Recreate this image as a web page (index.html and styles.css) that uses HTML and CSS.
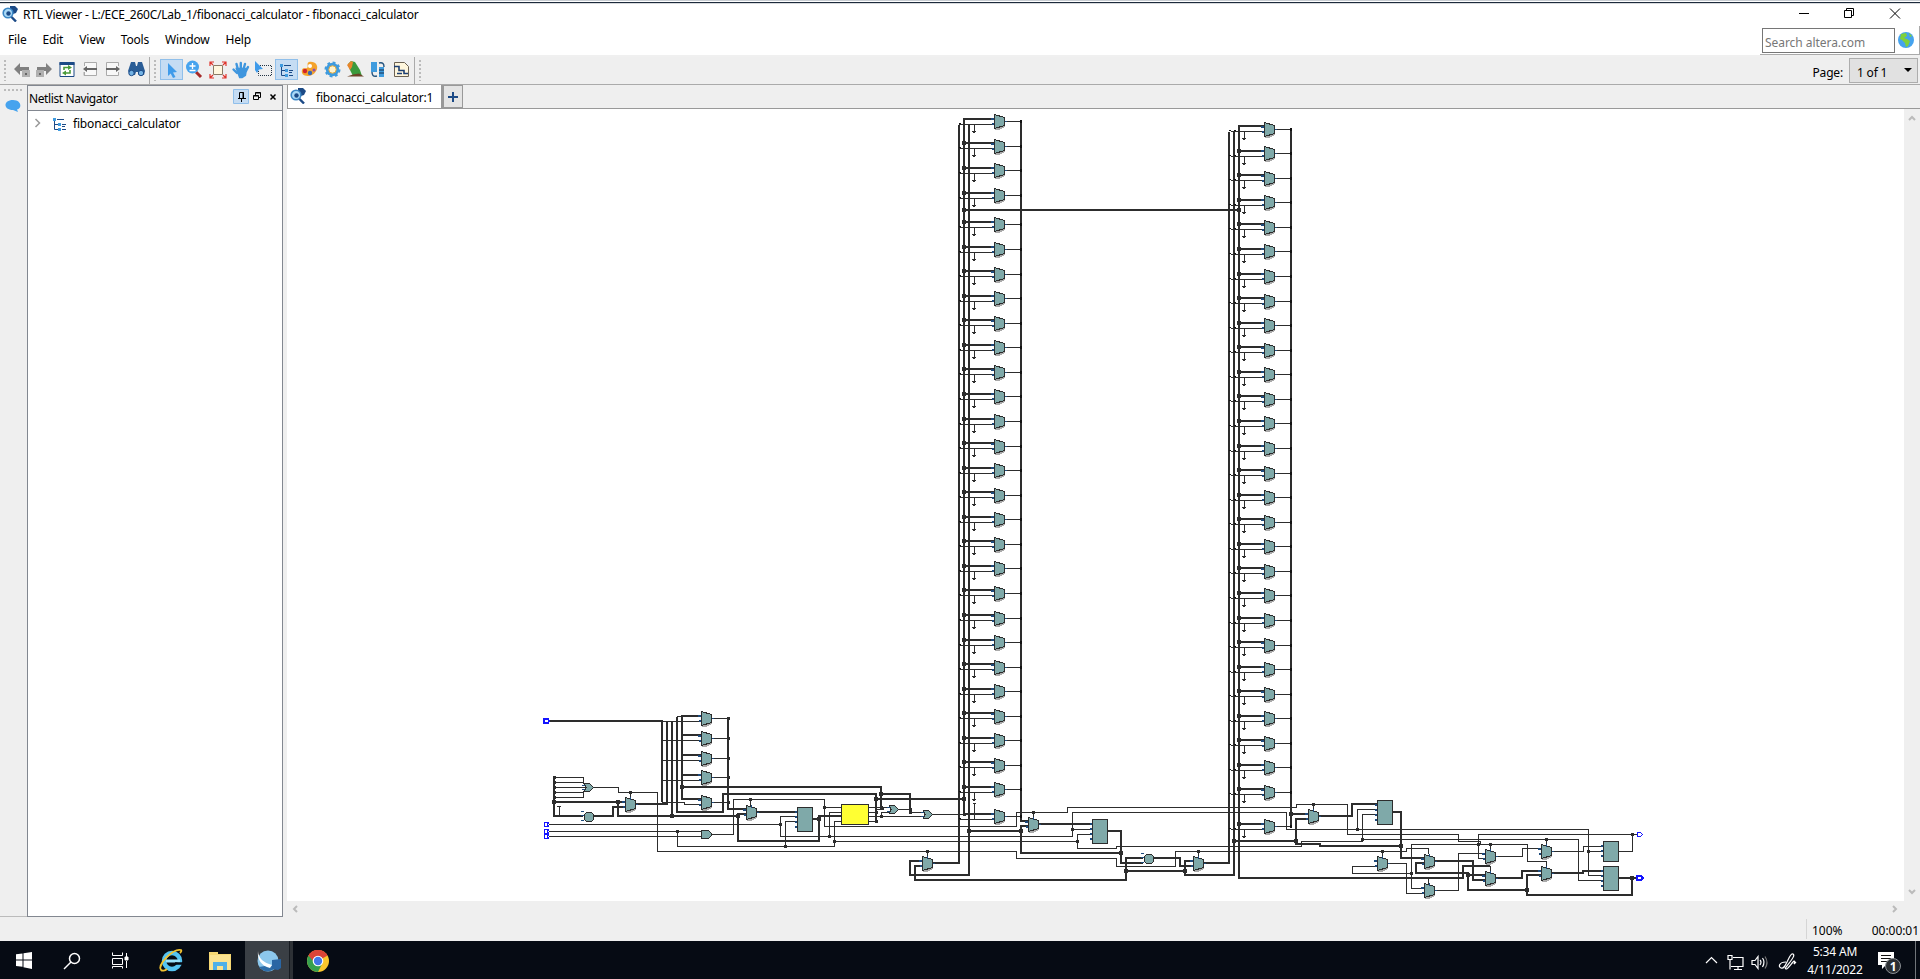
FILE: index.html
```
<!DOCTYPE html>
<html lang="en">
<head>
<meta charset="utf-8">
<title>RTL Viewer</title>
<link rel="stylesheet" href="styles.css">
</head>
<body>
<svg class="defs" width="0" height="0">
  <symbol id="viewer" viewBox="0 0 16 16"><path d="M8 0h5l3 3-2 4-3 1L8 5z" fill="#1c4a86"/><circle cx="6" cy="7" r="4.800" fill="#a9d9f7" stroke="#3b86c4" stroke-width="1.600"/><circle cx="6.500" cy="7.500" r="2.200" fill="#1c4a86"/><path d="M9.500 11l4.500 4.500" stroke="#1c4a86" stroke-width="2.400"/></symbol>
  <symbol id="tree" viewBox="0 0 16 16"><path d="M2.500 4v9.500h5M2.500 8.500h5M5 3.500h7M10 8.500h4M10 13.500h4M10 10.500h3" fill="none" stroke="#1c4a86"/><path d="M1 2h3v3H1zM6 7h3v3H6zM6 12h3v3H6z" fill="#3f9be0"/></symbol>
</svg>
<div class="window">
  <header class="title">
    <svg class="i16"><use href="#viewer"/></svg>
    <span class="title-text">RTL Viewer - L:/ECE_260C/Lab_1/fibonacci_calculator - fibonacci_calculator</span>
    <svg class="winbtns" width="110" height="16" viewBox="0 0 110 16" fill="none" stroke="#000"><path d="M3 8.500h10M48.500 5.500h7v7h-7zM50.500 5.500v-2h7v7h-2"/><path d="M94 3.500l10 10M104 3.500l-10 10"/></svg>
  </header>
  <div class="menubar">
    <nav class="menu"><span>File</span><span>Edit</span><span>View</span><span>Tools</span><span>Window</span><span>Help</span></nav>
    <div class="search"><div class="search-box">Search altera.com</div>
      <svg width="16" height="16" viewBox="0 0 16 16"><circle cx="8" cy="8" r="8" fill="#46a3ee"/><path d="M3 2l5-1 1 3-3 2 3 1 3 2-2 5-2 1-1-4-3-3-2-1z" fill="#7fd13b"/><path d="M11 1l3 3-2 1z" fill="#7fd13b"/></svg></div>
  </div>
  <div class="toolbar">
    <i class="grip"></i>
    <div class="tools first">
      <svg viewBox="0 1 23 21"><path d="M4 11l6-6v4h9v4h-9v4z" fill="#808080"/><path d="M12 12h8v7h-8z" fill="#b0b0b0"/><path d="M15 15h2v2h-2z" fill="#666"/></svg>
      <svg viewBox="0 1 23 21"><path d="M19 11l-6-6v4H4v4h9v4z" fill="#808080"/><path d="M3 12h8v7H3z" fill="#b0b0b0"/><path d="M6 15h2v2H6z" fill="#666"/></svg>
      <svg viewBox="0 1 23 21"><path d="M4 4.500h14v14H4z" fill="#fff" stroke="#1c4a86"/><path d="M3.500 4h15v3h-15z" fill="#1c4a86"/><path d="M8 12V9.500h5M14 12v3H9" fill="none" stroke="#4a9a3a" stroke-width="1.600"/><path d="M12 7l4 2.500-4 2.500zM10 12.500L6 15l4 2.500z" fill="#4a9a3a"/></svg>
      <svg viewBox="0 1 23 21"><path d="M5.500 8V4.500h12v13h-12V14M8 17.500h-3V14" fill="#f8f8f8" stroke="#aaa"/><path d="M4 11l4-3v2h10v2H8v2z" fill="#666"/></svg>
      <svg viewBox="0 1 23 21"><path d="M16.500 8V4.500h-12v13h12V14" fill="#f8f8f8" stroke="#aaa"/><path d="M18 11l-4-3v2H4v2h10v2z" fill="#666"/></svg>
      <svg viewBox="0 1 23 21"><path d="M6 4h4l1 4h1l1-4h4l3 9-1 4h-5l-1-3h-2l-1 3H5l-2-4z" fill="#2a5d96"/><circle cx="6.500" cy="15" r="2.700" fill="#74b3e4" stroke="#1c4a86"/><circle cx="16" cy="15" r="2.700" fill="#74b3e4" stroke="#1c4a86"/></svg>
    </div>
    <i class="sep"></i><i class="grip"></i>
    <div class="tools second">
      <svg class="on" viewBox="0 1 23 21"><path d="M8 5l9 9-4 .5 2.500 4.500-2.500 1-2.300-4.500L8 18z" fill="#3f9bea"/></svg>
      <svg viewBox="0 1 23 21"><path d="M13 14l5 5" stroke="#a52a2a" stroke-width="3"/><circle cx="9.500" cy="9" r="6.500" fill="#46a3ee"/><path d="M6.500 8h6M9.500 5v6M6.500 12.500h6" stroke="#fff" stroke-width="1.300"/></svg>
      <svg viewBox="0 1 23 21"><path d="M7.500 7.500h9v9h-9z" fill="#fff8df" stroke="#8a7a66"/><path d="M4 8V4h4M4 4l3 3M16 4h4v4M20 4l-3 3M4 16v4h4M4 20l3-3M16 20h4v-4M20 20l-3-3" fill="none" stroke="#e0342c" stroke-width="1.200"/></svg>
      <svg viewBox="0 1 23 21" fill="none" stroke="#3f96de" stroke-width="2.400" stroke-linecap="round"><path d="M9 12L7.500 6M11.800 11V5M14.500 11l1.500-5M17 13l2-4M8 15l-3.500-3.500"/><path d="M8 11h9l-1 6-3 2h-2z" fill="#3f96de"/></svg>
      <svg viewBox="0 1 23 21"><path d="M3 3l8 8-4 .5-2 3.500-2-3z" fill="#3f9bea"/><path d="M8 7.500h11.500v10h-13V12" fill="none" stroke="#234" stroke-dasharray="1 1"/></svg>
      <svg class="on" viewBox="0 1 23 21"><use href="#tree" x="4" y="4" width="16" height="16"/></svg>
      <svg viewBox="0 1 23 21"><path d="M11 4c7-1 9 4 8 7s-4 7-9 7-7-3-6-6 3-1 5-2-1-5 2-6z" fill="#f4a32c"/><circle cx="7" cy="13" r="2.200" fill="#d2232a"/><circle cx="12" cy="15" r="2.200" fill="#3768b4"/><circle cx="16" cy="12" r="1.500" fill="#8e4bb5"/><circle cx="12" cy="8" r="2" fill="#fff"/></svg>
      <svg viewBox="0 1 23 21"><circle cx="11.500" cy="11.500" r="6.700" fill="#3f9bde" stroke="#3f9bde" stroke-width="2.600" stroke-dasharray="2.700 2.550"/><circle cx="11.500" cy="11.500" r="3.700" fill="#fdf3d0" stroke="#e3a83a"/></svg>
      <svg viewBox="0 1 23 21"><path d="M4 6l3-3 4 1 5 8 2 6H9L6 12z" fill="#3b9a3c"/><path d="M3 7l4-4 2 1-1 5-2 3z" fill="#e8862b"/><path d="M3 18.500h17l-5-3-6 1z" fill="#6c4428"/></svg>
      <svg viewBox="0 1 23 21"><path d="M4 4h6v10H4zM12 9h5v10h-5z" fill="#3f9bde"/><path d="M12 5c4-1 5 1 5 4M10 18c-4 1-5-1-5-4M12 12h5M12 15h5" fill="none" stroke="#24547f" stroke-width="1.400"/></svg>
      <svg viewBox="0 1 23 21"><path d="M4.500 4.500h10l4 4v10h-14z" fill="#fff6dc" stroke="#6b6152"/><path d="M4 8.500h5v4h5v3h4M7 15.500h5" fill="none" stroke="#1c3f73" stroke-width="1.600"/></svg>
    </div>
    <i class="sep"></i><i class="grip"></i>
    <span class="page-label">Page:</span><div class="page-box">1 of 1<i class="caret"></i></div>
  </div>
  <div class="main">
    <aside class="strip"><i class="hgrip"></i><svg width="16" height="14" viewBox="0 0 16 14"><path d="M8 1c9 0 9 9 4 9.500L13 13 8 11C-2 11-2 1 8 1z" fill="#46a3ee"/></svg></aside>
    <section class="dock">
      <div class="dock-head"><span>Netlist Navigator</span>
        <svg width="46" height="16" viewBox="0 0 46 16"><path d="M.500.500h15v14H.500z" fill="#c5dcf3" stroke="#90bfea"/><path d="M6.500 9V3.500h4V9M10 3v6M5 9.500h8M8.500 10v3" fill="none" stroke="#000"/><path d="M20.500 6.500h5v4h-5zM22.500 6V3.500h5v5H26M22.500 4h5M20.500 7h5" fill="none" stroke="#000"/><path d="M37.500 5.500l5 5M42.500 5.500l-5 5" stroke="#000" stroke-width="1.500"/></svg></div>
      <div class="dock-body"><svg width="8" height="12" viewBox="0 0 8 12"><path d="M1.500 2l4 4-4 4" fill="none" stroke="#999" stroke-width="1.500"/></svg><svg class="i16"><use href="#tree"/></svg><span>fibonacci_calculator</span></div>
    </section>
    <section class="view">
      <div class="tabs"><div class="tab"><svg class="i16"><use href="#viewer"/></svg><span>fibonacci_calculator:1</span></div><div class="add"><svg width="10" height="10"><path d="M5 0v10M0 5h10" stroke="#1c4a86" stroke-width="2"/></svg></div></div>
      <div class="canvas">
        <svg id="sheet" width="1617" height="792" viewBox="287 109 1617 792" shape-rendering="crispEdges"></svg>
        <div class="vbar"><svg width="8" height="6"><path d="M1 5l3-3 3 3" /></svg><svg width="8" height="6"><path d="M1 1l3 3 3-3"/></svg></div>
      </div>
      <div class="hbar"><svg width="6" height="8"><path d="M5 1L2 4l3 3"/></svg><svg width="6" height="8"><path d="M1 1l3 3-3 3"/></svg></div>
    </section>
  </div>
  <footer class="status"><span class="zoom">100%</span><span class="time">00:00:01</span></footer>
</div>
<div class="taskbar">
  <div class="apps">
    <svg viewBox="0 0 48 38"><path d="M16 13.300l6.500-.900v6.100H16zM23.500 12.200l8.500-1.200v7.500h-8.500zM16 19.500h6.500v6.300l-6.500-.900zM23.500 19.500H32V28l-8.500-1.800z" fill="#fff"/></svg>
    <svg viewBox="0 0 48 38" fill="none" stroke="#fff" stroke-width="1.500"><circle cx="26.500" cy="17.500" r="5"/><path d="M23 21l-7 7"/></svg>
    <svg viewBox="0 0 48 38" fill="none" stroke="#fff"><path d="M16.500 11.500v3h10v-3M16.500 17.500h10v6h-10zM16.500 27.500v-2h10v2M30.500 12v4M30.500 20v7"/><path d="M29 16h3v3h-3z" fill="#fff"/></svg>
    <svg viewBox="0 0 48 38"><circle cx="28" cy="20" r="8" fill="none" stroke="#55c4f2" stroke-width="4.500"/><path d="M22 20h14" stroke="#9be2fb" stroke-width="3"/><path d="M31 22.500h7" stroke="#060b14" stroke-width="2.500"/><path d="M17 29c-4-5 12-22 20-20 1 1 0 2-1 3M17 29c1 1 4 1 6-1" fill="none" stroke="#f2c230" stroke-width="1.800"/></svg>
    <svg viewBox="0 0 48 38"><path d="M17 11h9v2h13v16H17z" fill="#f6d873"/><path d="M18 14h20v15H18z" fill="#fbe391"/><path d="M21 29v-8h14v8h-4v-4h-6v4z" fill="#4fb0e8"/></svg>
    <svg class="active" viewBox="0 0 44 38"><circle cx="23" cy="20" r="10.500" fill="#8cc7ec"/><path d="M14 26a10.500 10.500 0 0 0 15 2l-3-4z" fill="#2d6da8"/><path d="M13 10c0 7 6 12 14 14l-2 3c-9-2-13-9-12-17z" fill="#fff"/><path d="M27 19l9-1v9l-3 2-6-1z" fill="#2a66a4"/></svg>
    <i class="stack"></i>
    <svg class="chrome" viewBox="0 0 48 38"><circle cx="24" cy="20" r="11" fill="#fbc62e"/><path d="M24 20L14.500 14.500a11 11 0 0 1 19 0z" fill="#dc4437"/><path d="M24 20L14.500 14.500A11 11 0 0 0 24 31l4.500-9z" fill="#36a04f"/><path d="M24 14.500h9.500a11 11 0 0 0-19 0l5 6z" fill="#dc4437"/><circle cx="24" cy="20" r="5.300" fill="#fff"/><circle cx="24" cy="20" r="4.200" fill="#4277e8"/></svg>
  </div>
  <div class="tray">
    <svg width="96" height="24" viewBox="0 0 96 24" fill="none" stroke="#fff" stroke-width="1.200"><path d="M1 15l5.500-5.500L12 15"/><path d="M28 9.500h10v9H26M23 7.500h4v4h-4zM25 12v9.500M29 21.500h8M33 18.500v3"/><path d="M47 12.500h3l3-4v12l-3-4h-3zM55 12q2 2 0 5M57.500 10q3 4 0 9"/><path d="M60 8.500q4 6 0 12" stroke="#777"/><path d="M81 14c-7 0-8 5-5 6s4-2 6-6 4-9 6-8 0 4-3 8-6 7-4 7 5-5 7-7 2 0 1 2l2-2"/></svg>
    <div class="clock"><span>5:34 AM</span><span>4/11/2022</span></div>
    <svg width="26" height="26" viewBox="0 0 26 26"><path d="M1 4h16v13H9l-4 4v-4H1z" fill="#fff"/><path d="M4 7.500h10M4 10.500h10M4 13.500h8" stroke="#111"/><circle cx="16" cy="18" r="7.500" fill="#2b2f33" stroke="#8a8f94"/><text class="badge" x="16" y="22.500" text-anchor="middle">1</text></svg>
    <i class="peek"></i>
  </div>
</div>
<script src="schematic.js"></script>
</body>
</html>
```
FILE: styles.css
```
* { box-sizing: border-box; }
body { margin: 0; width: 1920px; height: 979px; overflow: hidden; font: 12px "Noto Sans", "Open Sans", sans-serif; letter-spacing: -.18px; color: #000; background: #efefef; display: flex; flex-direction: column; }
.defs { position: absolute; }
svg { display: block; flex: none; }
.i16 { width: 16px; height: 16px; }
.window { height: 941px; display: flex; flex-direction: column; }
.title { height: 26px; border-top: 1px solid #c9ced4; box-shadow: inset 0 1px 0 #fff, inset 0 2px 0 #1d2b3c, inset 0 3px 0 #d8dadd; background: #fff; display: flex; align-items: center; padding: 3px 16px 0 2px; gap: 5px; flex: none; }
.title .i16 { margin-bottom: 3px; }
.title-text { white-space: nowrap; letter-spacing: -.25px; margin-bottom: 1px; }
.winbtns { margin-left: auto; margin-right: -2px; margin-bottom: 5px; }
.menubar { height: 31px; background: #fff; border-bottom: 2px solid #f0f0f0; display: flex; justify-content: space-between; flex: none; }
.menu { display: flex; gap: 16px; padding: 5px 0 0 8px; }
.search { width: 160px; border-right: 1px solid #aaa; border-bottom: 1px solid #aaa; display: flex; align-items: center; gap: 3px; padding-left: 2px; }
.search-box { width: 133px; height: 25px; border: 1px solid #767676; color: #777; padding: 5px 2px 0; line-height: 17px; letter-spacing: -.05px; }
.toolbar { height: 28px; background: #efefef; border-bottom: 1px solid #aaa; display: flex; align-items: flex-start; flex: none; }
.grip { width: 2px; height: 21px; margin: 3px 0 0 4px; background: repeating-linear-gradient(#bbb 0 2px, transparent 2px 4px); }
.tools { display: flex; }
.tools svg { width: 23px; height: 21px; margin-top: 2px; }
.first { margin-left: 4px; }
.second { margin-left: 4px; }
.on { background: #c5dcf3; outline: 1px solid #90bfea; outline-offset: -1px; }
.sep { width: 1px; height: 27px; background: #aaa; margin-left: 1px; }
.page-label { margin: 7px 6px 0 auto; }
.page-box { width: 69px; height: 25px; margin: 1px 2px 0 0; border: 1px solid #adadad; background: #e1e1e1; padding: 5px 5px 0 7px; display: flex; justify-content: space-between; }
.caret { margin-top: 4px; width: 8px; height: 4px; background: #000; clip-path: polygon(0 0, 100% 0, 50% 100%); }
.main { flex: 1; display: flex; min-height: 0; }
.strip { width: 27px; height: 832px; border-bottom: 1px solid #bbb; display: flex; flex-direction: column; gap: 8px; padding: 4px 0 0 4px; }
.strip svg { margin-left: 1px; }
.hgrip { width: 18px; height: 2px; background: repeating-linear-gradient(90deg, #bbb 0 2px, transparent 2px 4px); }
.dock { width: 256px; height: 832px; border: 1px solid #828790; display: flex; flex-direction: column; }
.dock-head { height: 24px; display: flex; justify-content: space-between; padding: 4px 3px 0 1px; }
.dock-head span { letter-spacing: -.4px; }
.dock-head svg { margin-top: -1px; }
.dock-body { flex: 1; border-top: 1px solid #828790; background: #fff; padding: 4px 0 0 6px; display: flex; align-items: flex-start; }
.dock-body svg { margin-top: 2px; }
.dock-body .i16 { margin: 1px 5px 0 10px; }
.view { flex: 1; margin-left: 4px; display: flex; flex-direction: column; }
.tabs { height: 24px; border-bottom: 1px solid #999; display: flex; }
.tab { height: 24px; width: 155px; background: #fff; border: 1px solid #999; border-top: 0; display: flex; padding: 3px 0 0 2px; gap: 10px; }
.tab span { padding-top: 1px; white-space: nowrap; }
.add { width: 21px; height: 23px; border: 1px solid #999; border-left-width: 2px; background: #e4e4e4; display: grid; place-items: center; }
.canvas { height: 792px; background: #fff; display: flex; }
.vbar { width: 16px; background: #efefef; display: flex; flex-direction: column; justify-content: space-between; align-items: center; padding: 6px 0; }
.hbar { height: 16px; display: flex; justify-content: space-between; align-items: center; padding: 0 22px 0 5px; }
.vbar path, .hbar path { fill: none; stroke: #bbb; stroke-width: 2; }
.status { height: 24px; display: flex; justify-content: flex-end; letter-spacing: -.05px; }
.zoom { width: 52px; height: 20px; margin-top: 2px; border-left: 1px solid #d5d5d5; padding: 3px 0 0 5px; }
.time { width: 62px; text-align: right; padding: 5px 1px 0 0; }
.taskbar { height: 38px; background: #060b14; display: flex; justify-content: space-between; color: #fff; }
.apps, .tray { display: flex; }
.apps svg { width: 48px; height: 38px; }
.apps .active { width: 44px; background: #3a3f45; margin-left: 5px; }
.apps .stack { width: 4px; background: #2d3136; border-left: 1px solid #181c22; }
.apps .chrome { margin-left: 1px; }
.tray svg { margin-top: 7px; }
.clock { width: 78px; margin: 2px 3px 0 -5px; display: flex; flex-direction: column; align-items: center; line-height: 18px; font-size: 12px; }
.peek { width: 1px; height: 38px; background: #70757a; margin: 0 4px 0 12px; }
.badge { font: bold 12px "Noto Sans", sans-serif; fill: #fff; }
```
FILE: schematic.js
```
const sheet = document.getElementById('sheet');
const INK = '#2d2d2d', TEAL = '#7fa9a9', BLUE = '#1d4a7c', PIN = '#1414ff';
const wires = [], parts = [];
const tag = (list, markup) => list.push(markup);
const line = (list, pts, width, color = INK) =>
  tag(list, `<polyline points="${pts}" fill="none" stroke="${color}" stroke-width="${width}" stroke-linecap="square"/>`);
const box = (x, y, w, h, color) => `<rect x="${x}" y="${y}" width="${w}" height="${h}" fill="${color}"/>`;

// Two-input multiplexer, left edge x and output row y.
function mux(x, y, select) {
  tag(parts, `<path d="M${x + 1} ${y + 9}h4l6-3v-2l-10 3z" fill="#aaa"/>
    <path d="M${x + .5} ${y - 6.5}l10 3v8l-10 3z" fill="${TEAL}" stroke="${INK}"/>` +
    box(x - 3, y - 3, 3, 2, BLUE) + box(x - 2, y + 2, 2, 2, BLUE) + box(x + 11, y, 2, 1, BLUE) +
    (select ? box(x + 5, y - 7, 1, 3, BLUE) : ''));
}
function or(x, y) {
  tag(parts, `<path d="M${x + .5} ${y - 3.5}h5l4 4-4 4h-5l1.500-4z" fill="${TEAL}" stroke="${INK}"/>` + box(x - 2, y - 2, 3, 1, BLUE) + box(x - 2, y + 2, 3, 1, BLUE));
}
function adder(x, y) {
  tag(parts, `<path d="M${x + 2.5} ${y - 3.500}h5l2 2v5l-2 2h-5l-2-2v-5z" fill="${TEAL}" stroke="${INK}"/>` + box(x - 3, y - 5, 3, 1, BLUE) + box(x - 3, y + 4, 3, 1, BLUE) + box(x - 3, y - 1, 3, 1, BLUE));
}
function reg(x, y, w, h, fill = TEAL) {
  tag(parts, `<rect x="${x + .5}" y="${y + .5}" width="${w - 1}" height="${h - 1}" fill="${fill}" stroke="${INK}"/>`);
  if (fill === TEAL) for (let p = 4; p < h - 3; p += 5) tag(parts, box(x - 2, y + p, 2, 2, BLUE));
}
function inPin(x, y) {
  tag(parts, `<path d="M${x + .5} ${y - 1.500}h4l-1 2 1 2h-4z" fill="#fff" stroke="${PIN}"/>`);
}
function outPin(x, y) {
  tag(parts, `<path d="M${x + .5} ${y - 1.500}h3l2 2-2 2h-3z" fill="#fff" stroke="${PIN}"/>`);
}

// Sections hold wires on a third-of-a-pixel grid from their own origin.
function section(ox, oy, thick, thin, bigDots, dots) {
  const map = (s, f) => s.split(' ').map(p => { const [x, y] = p.split(',').map(Number); return f(x / 3 + ox) + ',' + f(y / 3 + oy); }).join(' ');
  thin.forEach(s => line(wires, map(s, v => Math.floor(v + .01) + .5), 1));
  thick.forEach(s => line(wires, map(s, Math.round), 2));
  const each = (s, f) => s && s.split(' ').forEach(p => { const [x, y] = p.split(',').map(Number); f(x / 3 + ox, y / 3 + oy); });
  each(bigDots, (x, y) => tag(wires, box(Math.round(x) - 2, Math.round(y) - 2, 4, 4, INK)));
  each(dots, (x, y) => tag(wires, box(Math.floor(x + .01) - 1, Math.floor(y + .01) - 1, 3, 3, INK)));
}

// Mux ladders
const leftOut = [121,146,170,195,224,249,274,298,323,347,372,396,421,446,470,495,519,544,568,593,618,642,667,691,716,740,765,789,816];
const leftIn = [119,143,168,193,222,247,271,296,320,345,369,394,419,443,468,492,517,541,566,590,615,640,664,689,713,738,762,787,814];
const rightOut = [129,153,178,202,227,251,276,301,325,350,374,399,423,448,473,497,522,546,571,595,620,645,669,694,718,743,767,792,826];
const rightIn = [126,151,175,200,224,249,274,298,323,347,372,396,421,446,470,495,519,544,568,593,618,642,667,691,716,740,765,789,824];
function ladder(x, outs, ins, right) {
  outs.forEach((y, i) => {
    const t = ins[i], row = t + 5 + .5, feed = right ? x + 10 : x + 5;
    line(wires, `${feed},${t} ${x + 34},${t}`, 2);
    line(wires, `${x + (right ? 2 : 0) + .5},${row} ${x + 34},${row}`, 1);
    line(wires, `${x + 46},${y + .5} ${x + 62},${y + .5}`, 1);
    tag(wires, box(x + 61, y - 1, 2, 3, '#111') + box(x, row - 1.5, 2, 1, '#111'));
    if (right) tag(wires, box(x + 5, row - 1.5, 2, 1, '#111'));
    if (i && (right || i < outs.length - 1)) tag(wires, box(feed - 2, t - 2, 4, 4, INK));
    if (!right && i === outs.length - 1) line(wires, `${x + 15.5},${row} ${x + 15.5},803.5 ${x + 13.5},803.5 ${x + 16.5},803.5`, 1);
    else tag(wires, box(x + 15, t + 6, 1, 7, INK) + box(x + 13, t + 12, 4, 1, INK) + box(x + 14, t + 13, 2, 1, INK));
    mux(x + 35, y);
  });
}
line(wires, '959,126 959,863', 2);
line(wires, '964,119 964,814', 2);
line(wires, '969,126 969,875', 2);
line(wires, '1021,121 1021,821', 2);
line(wires, '1229,133 1229,863', 2);
line(wires, '1234,133 1234,875', 2);
line(wires, '1239,126 1239,878', 2);
line(wires, '1291,129 1291,827', 2);
line(wires, '964,210 1239,210', 2);
tag(wires, box(962, 208, 4, 4, INK) + box(1237, 208, 4, 4, INK));
ladder(959, leftOut, leftIn, false);
ladder(1229, rightOut, rightIn, true);

// Input side
section(530, 700, [
  '57,63 397,63 397,302', '412,68 412,312 320,312', '427,68 427,348', '441,54 441,337 579,337 579,282 1038,282 1038,364',
  '457,51 457,296', '457,48 510,48', '457,105 510,105', '457,165 510,165', '457,225 510,225', '457,297 510,297',
  '594,54 594,327 645,327', '457,261 1053,261 1053,323', '1053,282 1140,282', '1038,297 1140,297',
  '73,231 73,348 157,348', '73,306 283,306', '264,306 264,348 624,348', '645,342 624,342 624,423 867,423 867,348 931,348',
  '193,348 249,348 249,321 283,321', '683,336 798,336', '850,357 867,357'
], [
  '441,49 457,49', '397,64 512,64', '397,121 512,121', '397,181 512,181', '397,241 512,241', '397,307 463,307 463,313 512,313',
  '548,55 594,55', '548,115 594,115', '548,175 594,175', '548,232 594,232', '548,307 594,307',
  '73,232 160,232 160,250 165,250', '73,247 160,247', '73,262 168,262', '73,277 160,277 160,292 73,292', '160,274 166,274',
  '193,262 265,262 265,277 382,277 382,454 1140,454', '301,277 301,292', '82,319 91,319', '88,319 88,348',
  '57,373 751,373', '800,349 751,349 751,409 1140,409', '57,394 512,394', '442,394 442,439 913,439 913,364 932,364',
  '766,439 766,364 800,364', '913,424 1140,424', '57,409 512,409', '547,403 610,403 610,298 883,298 883,379 1140,379',
  '661,298 661,315', '883,322 932,322', '898,409 898,337 932,337', '1018,322 1053,322', '1018,337 1038,337',
  '1018,349 1140,349', '1018,364 1038,364', '1038,328 1060,328 1060,322 1075,322', '1053,349 1053,337 1075,337', '1107,328 1140,328'
], '73,306 264,306 427,348 457,261 624,348 867,357 1053,282 1038,297',
  '73,232 73,247 73,262 73,277 73,292 301,277 442,394 661,298 751,373 766,439 883,322 898,409 913,424 1053,349 594,55 594,115 594,175 594,232 594,307 1038,337 1038,364 1053,322');
[718, 738, 758, 777, 802].forEach(y => mux(701, y));
mux(625, 804, true); mux(746, 812, true);
or(584, 787); or(889, 809); adder(584, 816);
tag(parts, `<path d="M701.500 830.500h7l3 3v2l-3 3h-7z" fill="${TEAL}" stroke="${INK}"/>`);
reg(797, 807, 16, 25); reg(841, 804, 28, 21, '#ffff33');
tag(parts, `<path d="M544 719h4l1 2-1 2h-4z" fill="#fff" stroke="${PIN}" stroke-width="2"/>`);
inPin(544, 824); inPin(544, 831); inPin(544, 836);

// Middle
section(890, 760, [
  '60,102 60,157', '60,117 222,117', '393,183 412,183', '412,198 393,198 393,279 693,279', '237,213 393,213', '449,192 604,192',
  '655,213 693,213 693,309 756,309', '94,303 60,303 60,345 237,345', '94,318 75,318 75,360 708,360 708,294 756,294',
  '130,309 207,309', '708,333 885,333', '793,294 870,294 870,318 907,318', '907,303 885,303 885,345 1032,345',
  '944,309 1017,309', '1032,243 1218,243'
], [
  '60,157 95,157', '60,169 95,169', '130,163 222,163', '60,199 380,199 380,157 532,157 532,142 1200,142',
  '60,229 547,229 547,157 1189,157 1189,208', '60,244 562,244 562,265 680,265 680,259 1200,259', '562,244 562,223 605,223',
  '547,208 605,208', '60,274 379,274 379,295 680,295 680,319 857,319 857,274 1200,274', '430,157 430,171', '112,274 112,288', '925,274 925,288'
], '222,117 237,213 393,213 693,279 708,333 885,333 1032,243', '60,148 60,157 222,163 430,157 112,274 925,274 547,208 562,244');
mux(1028, 824, true); mux(922, 863, true); mux(1193, 863, true);
or(923, 814); adder(1144, 858); reg(1092, 819, 16, 25);

// Output side
section(1220, 760, [
  '57,354 730,354 730,318 807,318', '213,162 262,162', '262,177 228,177 228,252 300,252 300,258 543,258', '299,168 397,168 397,132 468,132',
  '520,156 543,156 543,294 610,294', '610,309 587,309 587,339 744,339 744,390 921,390', '744,345 793,345', '647,303 759,303 759,360 793,360',
  '830,354 906,354 906,333 961,333', '961,345 921,345 921,405 1236,405 1236,354', '998,339 1090,339 1090,333 1147,333', '1197,354 1248,354'
], [
  '199,208 1105,208 1105,346 1148,346', '210,142 230,142 230,133 382,133 382,223 715,223 715,244 781,244 781,253',
  '210,259 245,259 245,244 427,244 427,163 469,163', '427,238 1075,238 1075,361 1148,361', '210,274 559,274 559,265 625,265 625,280',
  '280,133 280,148', '412,208 412,148 469,148', '1250,223 775,223 775,295 795,295', '1237,223 1237,274 1197,274',
  '612,385 574,385 574,253 922,253 922,304 979,304 979,316', '811,253 811,267', '574,340 397,340 397,319 470,319', '487,274 487,287',
  '505,310 559,310 559,400 612,400', '647,391 715,391 715,280 795,280', '625,354 625,369', '830,289 907,289 907,265 962,265',
  '811,319 811,333', '998,274 1090,274 1090,259 1148,259', '979,238 979,251', '1105,274 1148,274'
], '213,162 228,243 543,258 744,345 921,390 1236,354', '280,133 412,208 427,238 487,274 574,340 775,253 811,253 979,238 1105,274 1237,223');
[[1308, 816], [1377, 863], [1424, 861], [1424, 890], [1485, 856], [1485, 878], [1541, 851], [1541, 873]].forEach(([x, y]) => mux(x, y, true));
reg(1377, 800, 16, 25); reg(1603, 841, 16, 21); reg(1603, 866, 16, 25);
outPin(1637, 834);
tag(parts, `<path d="M1637 876h4l2 2-2 2h-4z" fill="#fff" stroke="${PIN}" stroke-width="2"/>`);

sheet.innerHTML = wires.join('') + parts.join('');
```
